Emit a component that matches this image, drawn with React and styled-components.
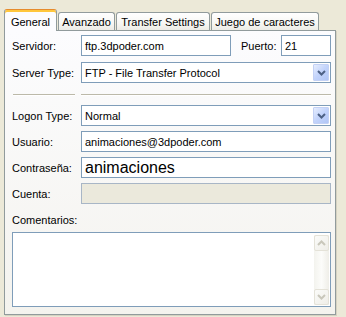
import React from "react";
import styled, { createGlobalStyle } from "styled-components";

const Global = createGlobalStyle`
  html, body { margin: 0; padding: 0; background: #ece9d8; }
  body { font-family: "Liberation Sans", Arial, sans-serif; font-size: 11px; color: #000; }
  * { box-sizing: border-box; }
`;

const Frame = styled.div`
  width: 346px;
  height: 317px;
  padding: 9px 10px 2px 4px;
  display: flex;
  flex-direction: column;
`;

const TabStrip = styled.div`
  display: flex;
  align-items: flex-end;
  gap: 1px;
  height: 22px;
  margin-bottom: -1px;
  position: relative;
  z-index: 1;
`;

const Tab = styled.div`
  width: ${(p) => p.$w}px;
  flex: none;
  display: flex;
  align-items: center;
  justify-content: center;
  border: 1px solid #919b9c;
  border-bottom: none;
  border-radius: 3px 3px 0 0;
  white-space: nowrap;
  ${(p) =>
    p.$active
      ? `
    height: 22px;
    padding-top: 2px;
    background: #fcfcfe;
    border-top: 1px solid #e68b2c;
    box-shadow: inset 0 2px 0 #ffc73c;
  `
      : `
    height: 18px;
    margin-bottom: 1px;
    padding-top: 1px;
    background: linear-gradient(#ffffff, #f7f7f4 60%, #ecebe5);
  `}
`;

const Panel = styled.div`
  flex: 1;
  border: 1px solid #919b9c;
  box-shadow: 1px 1px 0 #d6d2c2;
  background: linear-gradient(#fcfcfe, #f4f3ee);
  padding: 4px 4px 7px 7px;
  display: flex;
  flex-direction: column;
`;

const Row = styled.div`
  display: grid;
  grid-template-columns: 69px 1fr;
  align-items: center;
  height: 21px;
  margin-top: ${(p) => p.$mt || 0}px;
`;

const Label = styled.span`
  white-space: nowrap;
  color: #000;
`;

const Field = styled.div`
  display: flex;
  align-items: center;
  height: 21px;
`;

const Input = styled.div`
  height: 21px;
  width: ${(p) => (p.$w ? `${p.$w}px` : "auto")};
  flex: ${(p) => (p.$w ? "none" : "1")};
  border: 1px solid ${(p) => (p.$disabled ? "#a8b6c6" : "#7f9db9")};
  background: ${(p) => (p.$disabled ? "#ebe9dc" : "#fff")};
  padding: 0 3px;
  display: flex;
  align-items: center;
  font-size: ${(p) => (p.$big ? "16px" : "11px")};
  white-space: nowrap;
  overflow: hidden;
`;

const PortLabel = styled.span`
  flex: 1;
  padding-left: 10px;
`;

const Combo = styled.div`
  flex: 1;
  height: 21px;
  border: 1px solid #7f9db9;
  background: #fff;
  display: flex;
  align-items: center;
  padding: 1px;
`;

const ComboText = styled.span`
  flex: 1;
  padding-left: 2px;
  white-space: nowrap;
`;

const ComboButton = styled.span`
  width: 16px;
  height: 17px;
  border: 1px solid #c3d1f5;
  border-radius: 1px;
  background: linear-gradient(135deg, #e6edfe, #c2d3fb 50%, #b1c6f6);
  display: flex;
  align-items: center;
  justify-content: center;
`;

const SepRow = styled.div`
  display: grid;
  grid-template-columns: 69px 1fr;
  margin-top: 11px;
  margin-bottom: 9px;
`;

const Rule = styled.div`
  height: 2px;
  border-top: 1px solid #bcb9a9;
  border-bottom: 1px solid #ffffff;
  margin: ${(p) => (p.$left ? "0 6px 0 1px" : "0")};
`;

const CommentLabel = styled.div`
  margin-top: 10px;
  line-height: 13px;
`;

const MemoBox = styled.div`
  margin-top: 5px;
  height: 75px;
  border: 1px solid #7f9db9;
  background: #fff;
  display: flex;
  padding: 2px 1px 1px 0;
`;

const Memo = styled.textarea`
  flex: 1;
  border: none;
  outline: none;
  resize: none;
  background: transparent;
  font: inherit;
`;

const ScrollBar = styled.div`
  width: 15px;
  display: flex;
  flex-direction: column;
  justify-content: space-between;
  background: linear-gradient(90deg, #f3f3ee, #fcfcfa 50%, #efeee8);
`;

const ScrollButton = styled.span`
  height: 16px;
  border: 1px solid #e4e2d8;
  border-radius: 2px;
  background: linear-gradient(135deg, #fbfbf9, #efeee8);
  display: flex;
  align-items: center;
  justify-content: center;
`;

const Chevron = ({ up, color, sw }) => (
  <svg width="9" height="6" viewBox="0 0 9 6">
    <path
      d={up ? "M1 5 L4.5 1.5 L8 5" : "M1 1 L4.5 4.5 L8 1"}
      fill="none"
      stroke={color}
      strokeWidth={sw}
    />
  </svg>
);

const Select = ({ value }) => (
  <Combo>
    <ComboText>{value}</ComboText>
    <ComboButton>
      <Chevron color="#4d6185" sw={2} />
    </ComboButton>
  </Combo>
);

export default function App() {
  return (
    <>
      <Global />
      <Frame>
        <TabStrip>
          <Tab $w={53} $active>General</Tab>
          <Tab $w={57}>Avanzado</Tab>
          <Tab $w={94}>Transfer Settings</Tab>
          <Tab $w={108}>Juego de caracteres</Tab>
        </TabStrip>
        <Panel>
          <Row>
            <Label>Servidor:</Label>
            <Field>
              <Input $w={150}>ftp.3dpoder.com</Input>
              <PortLabel>Puerto:</PortLabel>
              <Input $w={50}>21</Input>
            </Field>
          </Row>
          <Row $mt={6}>
            <Label>Server Type:</Label>
            <Select value="FTP - File Transfer Protocol" />
          </Row>
          <SepRow>
            <Rule $left />
            <Rule />
          </SepRow>
          <Row>
            <Label>Logon Type:</Label>
            <Select value="Normal" />
          </Row>
          <Row $mt={5}>
            <Label>Usuario:</Label>
            <Input>animaciones@3dpoder.com</Input>
          </Row>
          <Row $mt={5}>
            <Label>Contraseña:</Label>
            <Input $big>animaciones</Input>
          </Row>
          <Row $mt={5}>
            <Label>Cuenta:</Label>
            <Input $disabled />
          </Row>
          <CommentLabel>Comentarios:</CommentLabel>
          <MemoBox>
            <Memo defaultValue="" />
            <ScrollBar>
              <ScrollButton>
                <Chevron up color="#c9c7bb" sw={2} />
              </ScrollButton>
              <ScrollButton>
                <Chevron color="#c9c7bb" sw={2} />
              </ScrollButton>
            </ScrollBar>
          </MemoBox>
        </Panel>
      </Frame>
    </>
  );
}
